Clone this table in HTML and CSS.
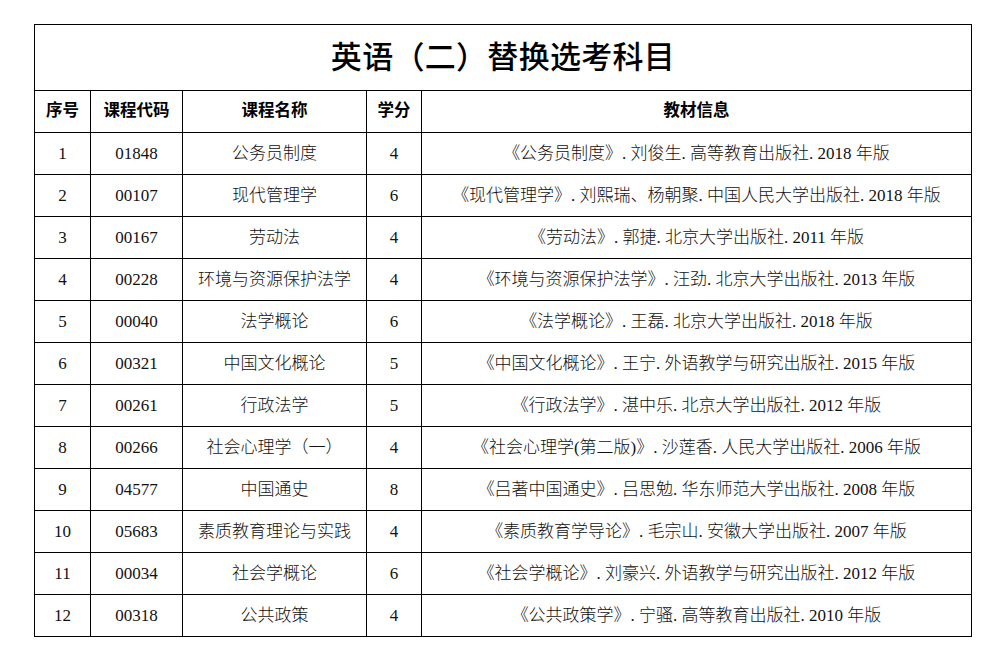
FILE: index.html
```html
<!DOCTYPE html>
<html lang="zh">
<head>
<meta charset="utf-8">
<title>英语（二）替换选考科目</title>
<link rel="stylesheet" href="styles.css">
</head>
<body>
<table class="course-table">
  <colgroup>
    <col class="c-no">
    <col class="c-code">
    <col class="c-name">
    <col class="c-credit">
    <col class="c-book">
  </colgroup>
  <thead>
    <tr class="title-row"><th colspan="5" class="title">英语（二）替换选考科目</th></tr>
    <tr class="head-row">
      <th>序号</th><th>课程代码</th><th>课程名称</th><th>学分</th><th>教材信息</th>
    </tr>
  </thead>
  <tbody>
    <tr><td>1</td><td>01848</td><td>公务员制度</td><td>4</td><td>《公务员制度》. 刘俊生. 高等教育出版社. 2018 年版</td></tr>
    <tr><td>2</td><td>00107</td><td>现代管理学</td><td>6</td><td>《现代管理学》. 刘熙瑞、杨朝聚. 中国人民大学出版社. 2018 年版</td></tr>
    <tr><td>3</td><td>00167</td><td>劳动法</td><td>4</td><td>《劳动法》. 郭捷. 北京大学出版社. 2011 年版</td></tr>
    <tr><td>4</td><td>00228</td><td>环境与资源保护法学</td><td>4</td><td>《环境与资源保护法学》. 汪劲. 北京大学出版社. 2013 年版</td></tr>
    <tr><td>5</td><td>00040</td><td>法学概论</td><td>6</td><td>《法学概论》. 王磊. 北京大学出版社. 2018 年版</td></tr>
    <tr><td>6</td><td>00321</td><td>中国文化概论</td><td>5</td><td>《中国文化概论》. 王宁. 外语教学与研究出版社. 2015 年版</td></tr>
    <tr><td>7</td><td>00261</td><td>行政法学</td><td>5</td><td>《行政法学》. 湛中乐. 北京大学出版社. 2012 年版</td></tr>
    <tr><td>8</td><td>00266</td><td>社会心理学（一）</td><td>4</td><td>《社会心理学(第二版)》. 沙莲香. 人民大学出版社. 2006 年版</td></tr>
    <tr><td>9</td><td>04577</td><td>中国通史</td><td>8</td><td>《吕著中国通史》. 吕思勉. 华东师范大学出版社. 2008 年版</td></tr>
    <tr><td>10</td><td>05683</td><td>素质教育理论与实践</td><td>4</td><td>《素质教育学导论》. 毛宗山. 安徽大学出版社. 2007 年版</td></tr>
    <tr><td>11</td><td>00034</td><td>社会学概论</td><td>6</td><td>《社会学概论》. 刘豪兴. 外语教学与研究出版社. 2012 年版</td></tr>
    <tr><td>12</td><td>00318</td><td>公共政策</td><td>4</td><td>《公共政策学》. 宁骚. 高等教育出版社. 2010 年版</td></tr>
  </tbody>
</table>
</body>
</html>
```
FILE: styles.css
```css
html, body {
  margin: 0;
  padding: 0;
  background: #ffffff;
}
body {
  padding: 24px 0 0 34px;
  font-family: "Liberation Serif", "Noto Sans CJK SC", serif;
  color: #111111;
}
.course-table {
  border-collapse: collapse;
  table-layout: fixed;
  width: 937px;
}
.c-no { width: 56px; }
.c-code { width: 92px; }
.c-name { width: 184px; }
.c-credit { width: 55px; }
.c-book { width: 550px; }
.course-table th,
.course-table td {
  border: 1.5px solid #000000;
  padding: 0;
  text-align: center;
  vertical-align: middle;
  font-size: 17px;
  height: 41px;
  white-space: nowrap;
  line-height: 1;
}
.course-table td {
  font-weight: 300;
}
.head-row th {
  font-size: 16.5px;
  font-weight: 700;
  color: #000000;
}
.title-row .title {
  height: 64.5px;
  font-size: 31px;
  font-weight: 500;
  color: #000000;
  letter-spacing: 0.3px;
}
```
